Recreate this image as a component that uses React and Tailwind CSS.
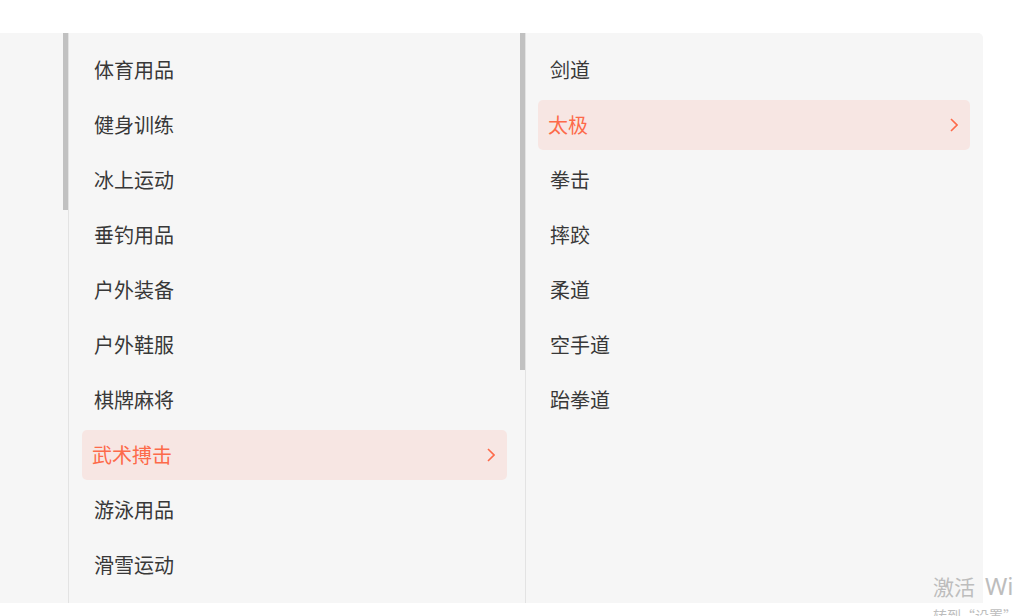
import React from "react";

const col2 = ["体育用品", "健身训练", "冰上运动", "垂钓用品", "户外装备", "户外鞋服", "棋牌麻将", "武术搏击", "游泳用品", "滑雪运动"];
const col3 = ["剑道", "太极", "拳击", "摔跤", "柔道", "空手道", "跆拳道"];

function Chevron() {
  return (
    <svg width="8" height="14" viewBox="0 0 8 14" fill="none">
      <path d="M1 1 L7 7 L1 13" stroke="#fd6a4a" strokeWidth="1.6" />
    </svg>
  );
}

function Item({ label, active }) {
  if (active) {
    return (
      <div className="h-[50px] shrink-0 flex items-center justify-between pl-[10px] pr-[12px] rounded-[5px] bg-[#f7e6e3] text-[#fd6a4a]">
        <span>{label}</span>
        <Chevron />
      </div>
    );
  }
  return (
    <div className="h-[50px] shrink-0 flex items-center pl-[12px] text-[#383838]">
      <span>{label}</span>
    </div>
  );
}

export default function App() {
  return (
    <div
      className="relative w-[1024px] h-[616px] bg-white overflow-hidden text-[20px] leading-none"
      style={{ fontFamily: '"Noto Sans CJK SC", "Noto Sans", sans-serif' }}
    >
      <div className="pt-[33px]">
        <div className="w-[983px] h-[570px] bg-[#f6f6f6] rounded-tr-[5px] flex overflow-hidden">
          <div className="w-[68px] shrink-0 flex justify-end">
            <div className="w-[5px] h-[177px] bg-[#c1c1c1]" />
          </div>
          <div className="w-[457px] shrink-0 border-l border-[#e3e3e3] flex">
            <div className="flex-1 px-[13px] pt-[12px] flex flex-col gap-[5px]">
              {col2.map((t) => (
                <Item key={t} label={t} active={t === "武术搏击"} />
              ))}
            </div>
            <div className="w-[5px] h-[337px] bg-[#c1c1c1]" />
          </div>
          <div className="flex-1 border-l border-[#e3e3e3] pl-[12px] pr-[13px] pt-[12px] flex flex-col gap-[5px]">
            {col3.map((t) => (
              <Item key={t} label={t} active={t === "太极"} />
            ))}
          </div>
        </div>
      </div>
      <div className="absolute left-[933px] top-[574px] text-[#bdbdbd] whitespace-nowrap">
        <div className="flex items-baseline h-[28px]">
          <span className="text-[21px]">激活</span>
          <span className="ml-[10px] text-[24px]" style={{ fontFamily: '"Noto Sans", sans-serif' }}>Wi</span>
        </div>
        <div className="text-[14px] leading-[18px] mt-[4px]">转到“设置”</div>
      </div>
    </div>
  );
}
